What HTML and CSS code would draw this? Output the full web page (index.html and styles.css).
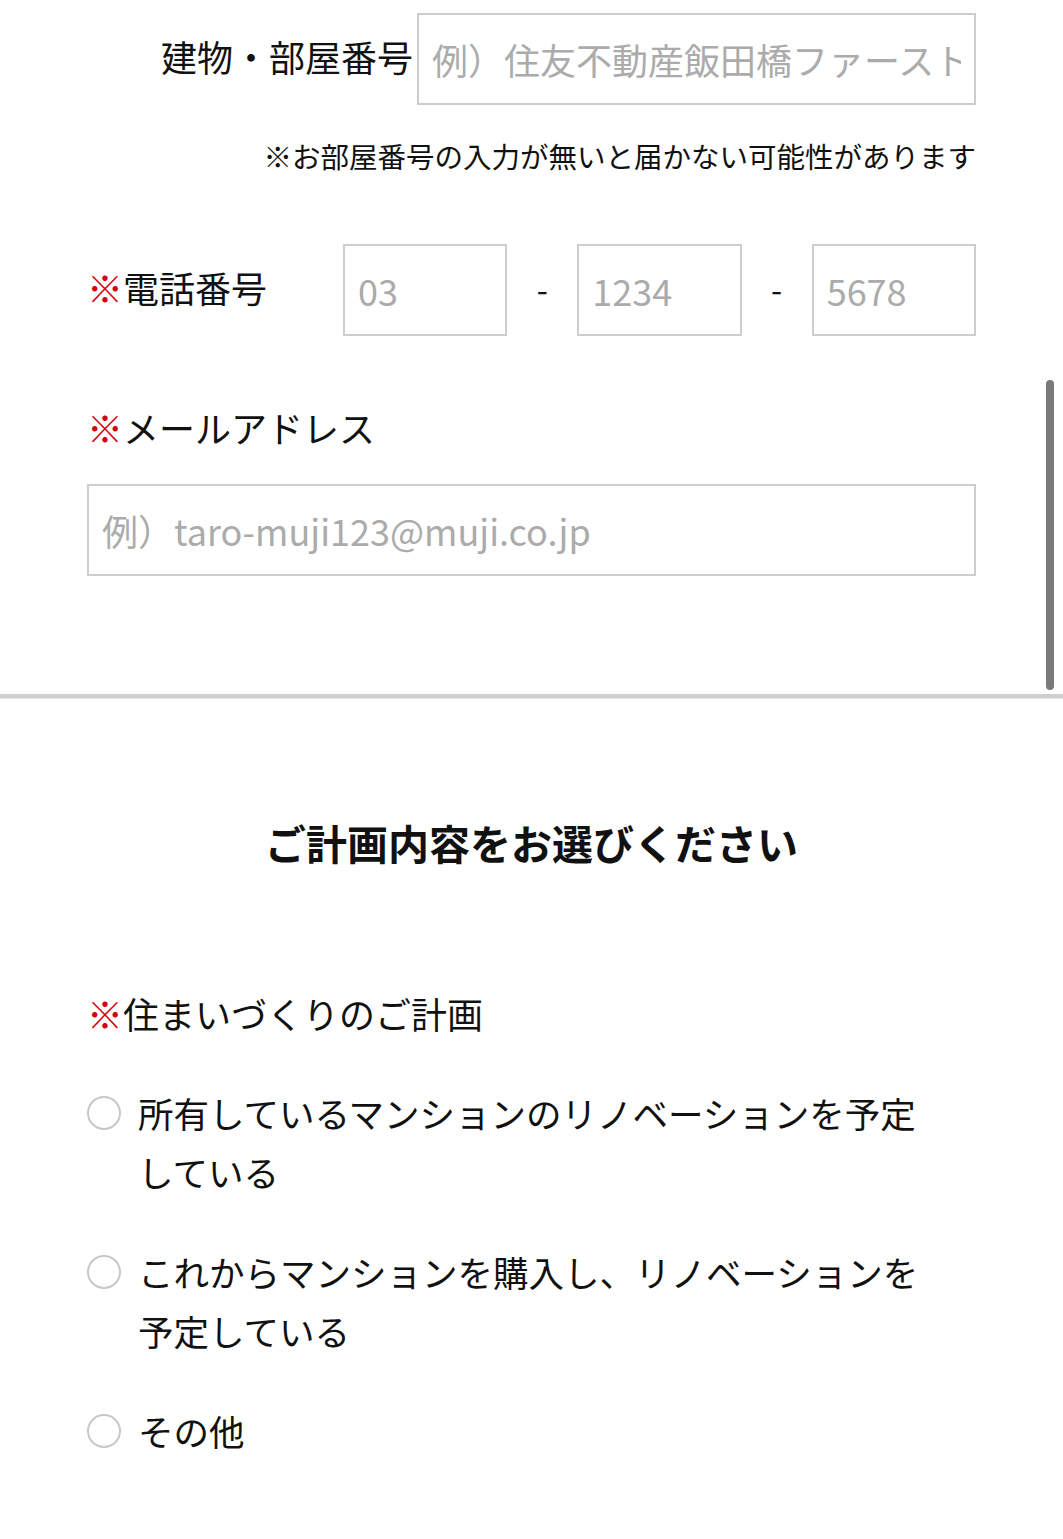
FILE: index.html
```html
<!DOCTYPE html>
<html lang="ja">
<head>
    <meta charset="UTF-8">
    <meta name="viewport" content="width=device-width, initial-scale=1.0">
    <title>お問い合わせフォーム</title>
    <link rel="stylesheet" href="styles.css">
</head>
<body>
    <!-- 住所・連絡先 -->
    <div class="form">
        <div class="row-building">
            <label class="label label-right" for="building">建物・部屋番号</label>
            <input class="input input-building" id="building" type="text" placeholder="例）住友不動産飯田橋ファースト">
        </div>
        <p class="note">※お部屋番号の入力が無いと届かない可能性があります</p>

        <div class="row-tel">
            <span class="label label-tel"><span class="req">※</span>電話番号</span>
            <input class="input" type="tel" placeholder="03">
            <span class="dash">-</span>
            <input class="input" type="tel" placeholder="1234">
            <span class="dash">-</span>
            <input class="input" type="tel" placeholder="5678">
        </div>

        <div class="label label-mail"><span class="req">※</span>メールアドレス</div>
        <input class="input input-mail" type="email" placeholder="例）taro-muji123@muji.co.jp">

        <div class="scroll-thumb"></div>
    </div>

    <div class="divider"></div>

    <!-- ご計画内容 -->
    <div class="plan">
        <h2 class="plan-title">ご計画内容をお選びください</h2>
        <div class="label"><span class="req">※</span>住まいづくりのご計画</div>
        <div class="options">
            <label class="option">
                <input type="radio" name="plan">
                <span class="radio"></span>
                <span class="option-text">所有しているマンションのリノベーションを予定している</span>
            </label>
            <label class="option">
                <input type="radio" name="plan">
                <span class="radio"></span>
                <span class="option-text">これからマンションを購入し、リノベーションを予定している</span>
            </label>
            <label class="option">
                <input type="radio" name="plan">
                <span class="radio"></span>
                <span class="option-text">その他</span>
            </label>
        </div>
    </div>
</body>
</html>
```

FILE: styles.css
```css
body {
    margin: 0;
    font-family: "Noto Sans CJK JP", "Noto Sans", sans-serif;
    color: #111;
    background: #fff;
}
.form {
    position: relative;
    padding: 13px 87px 118px;
}
.label {
    font-size: 36px;
    line-height: 42px;
}
.req {
    color: #d3000e;
}
.input {
    box-sizing: border-box;
    width: 100%;
    height: 92px;
    margin: 0;
    padding: 0 13px;
    border: 2px solid #cdcdcd;
    border-radius: 0;
    font-family: "Noto Sans CJK JP", "Noto Sans", sans-serif;
    font-size: 36px;
    color: #111;
    background: #fff;
    outline: none;
}
.input::placeholder {
    color: #ababab;
}
.row-building {
    display: flex;
    align-items: center;
    gap: 4px;
}
.label-right {
    flex: 1;
    padding-bottom: 7px;
    text-align: right;
    white-space: nowrap;
}
.input-building {
    width: 559px;
    flex: none;
}
.note {
    margin: 31px 0 0;
    font-size: 28.5px;
    line-height: 40px;
    text-align: right;
}
.row-tel {
    display: grid;
    grid-template-columns: 256px 1fr 70px 1fr 70px 1fr;
    align-items: center;
    margin-top: 68px;
}
.label-tel {
    padding-bottom: 7px;
}
.dash {
    font-size: 32px;
    padding-bottom: 4px;
    text-align: center;
}
.label-mail {
    margin-top: 70px;
}
.input-mail {
    display: block;
    margin-top: 36px;
}
.scroll-thumb {
    position: absolute;
    top: 380px;
    right: 9px;
    width: 8px;
    height: 310px;
    border-radius: 4px;
    background: #7a7a7a;
}
.divider {
    height: 4px;
    background: #d0d0d0;
    border-bottom: 1px solid #e6e6e6;
}
.plan {
    padding: 0 87px 60px;
}
.plan-title {
    margin: 115px 0 122px;
    font-size: 41px;
    line-height: 56px;
    font-weight: 700;
    text-align: center;
}
.options {
    display: flex;
    flex-direction: column;
    gap: 41px;
    margin-top: 49px;
}
.option {
    display: flex;
    align-items: flex-start;
    cursor: pointer;
}
.option input {
    display: none;
}
.radio {
    flex: none;
    box-sizing: border-box;
    width: 34px;
    height: 34px;
    margin-top: 13px;
    border: 2px solid #c8c8c8;
    border-radius: 50%;
}
.option-text {
    width: 800px;
    margin-left: 17px;
    font-size: 35.5px;
    line-height: 59px;
}
```
